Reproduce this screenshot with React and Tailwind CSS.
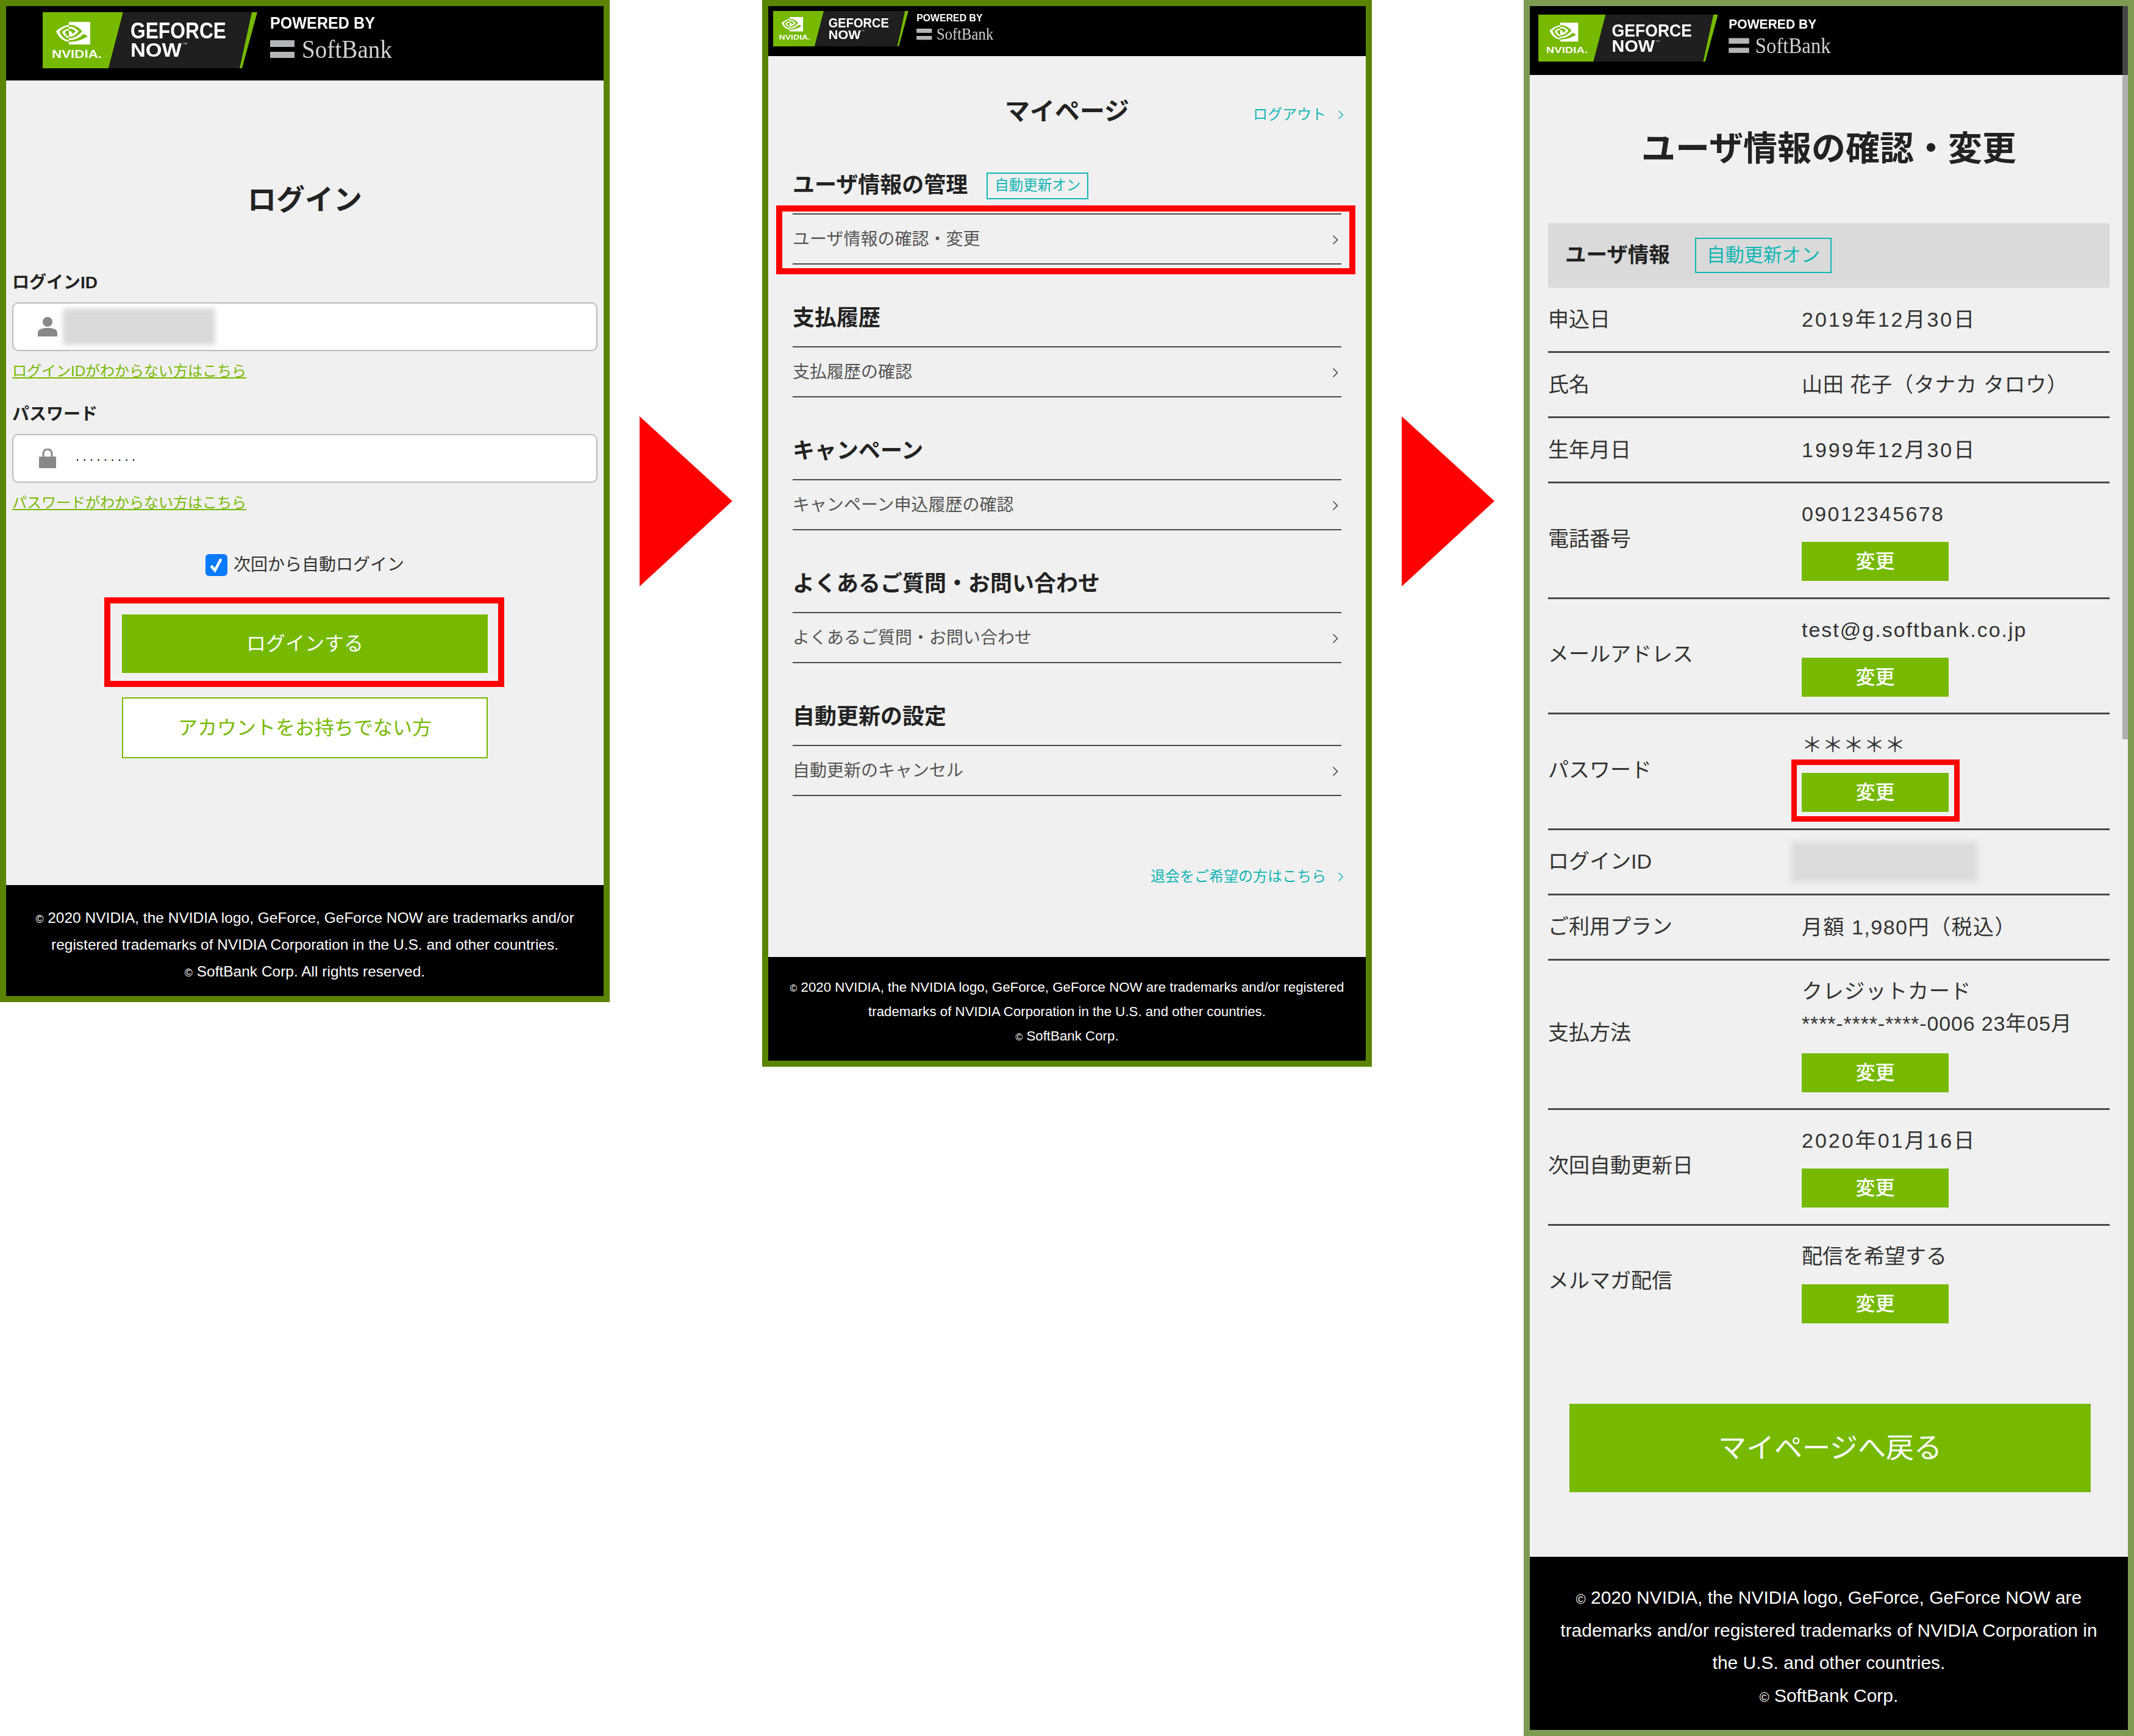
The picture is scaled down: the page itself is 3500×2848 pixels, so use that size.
import React from "react";

const sans = "font-['Liberation_Sans','Noto_Sans_CJK_JP',sans-serif]";

function Logo({ className }) {
  return (
    <svg viewBox="0 0 590 92" className={className}>
      <polygon points="0,0 132,0 108,92 0,92" fill="#76b900" />
      <polygon points="132,0 343,0 323,92 108,92" fill="#1f1f1f" />
      <polygon points="343,0 352,0 327,92 323,92" fill="#76b900" />
      <g transform="translate(22 6.5) scale(2.33)">
        <path
          fill="#fff"
          d="M8.948 8.798v-1.43a6.7 6.7 0 0 1 .424-.018c3.922-.124 6.493 3.374 6.493 3.374s-2.774 3.851-5.75 3.851c-.398 0-.787-.062-1.158-.185v-4.346c1.528.185 1.837.857 2.747 2.385l2.04-1.714s-1.492-1.952-4-1.952a6.016 6.016 0 0 0-.796.035m0-4.735v2.138l.424-.027c5.45-.185 9.01 4.47 9.01 4.47s-4.08 4.964-8.33 4.964c-.37 0-.733-.035-1.095-.097v1.325c.3.035.61.062.91.062 3.957 0 6.82-2.023 9.593-4.408.459.371 2.34 1.263 2.73 1.652-2.633 2.208-8.772 3.984-12.253 3.984-.335 0-.653-.018-.971-.053v1.864H24V4.063zm0 10.326v1.131c-3.657-.654-4.673-4.46-4.673-4.46s1.758-1.944 4.673-2.262v1.237H8.94c-1.528-.186-2.73 1.245-2.73 1.245s.68 2.412 2.739 3.11M2.456 10.9s2.164-3.197 6.5-3.533V6.201C4.153 6.59 0 10.653 0 10.653s2.35 6.802 8.948 7.42v-1.237c-4.84-.6-6.492-5.936-6.492-5.936z"
        />
      </g>
      <text x="15" y="75" fontFamily="Liberation Sans" fontWeight="700" fontSize="18" fill="#fff" textLength="82" lengthAdjust="spacingAndGlyphs">NVIDIA.</text>
      <text x="144" y="43" fontFamily="Liberation Sans" fontWeight="700" fontSize="36" fill="#fff" textLength="157" lengthAdjust="spacingAndGlyphs">GEFORCE</text>
      <text x="144" y="73" fontFamily="Liberation Sans" fontWeight="700" fontSize="32" fill="#fff" textLength="84" lengthAdjust="spacingAndGlyphs">NOW</text>
      <text x="229" y="56" fontFamily="Liberation Sans" fontSize="9" fill="#bbb">™</text>
      <text x="373" y="27" fontFamily="Liberation Sans" fontWeight="700" fontSize="27" fill="#fff" textLength="172" lengthAdjust="spacingAndGlyphs">POWERED BY</text>
      <rect x="373" y="46" width="40" height="11" fill="#b3b6b9" />
      <rect x="373" y="65" width="40" height="10" fill="#b3b6b9" />
      <text x="425" y="75" fontFamily="Liberation Serif" fontSize="42" fill="#d0d0d0" textLength="148" lengthAdjust="spacingAndGlyphs">SoftBank</text>
    </svg>
  );
}

function Chevron({ className }) {
  return (
    <svg viewBox="0 0 10 16" fill="none" className={className}>
      <polyline points="1.5,1 8.5,8 1.5,15" stroke="currentColor" strokeWidth="1.6" />
    </svg>
  );
}

function Arrow() {
  return (
    <svg viewBox="0 0 152 279" className="w-[152px] h-[279px] shrink-0 mt-[683px]">
      <polygon points="0,0 152,139 0,279" fill="#ff0000" />
    </svg>
  );
}

function PersonIcon() {
  return (
    <svg viewBox="0 0 32 32" className="w-[32px] h-[32px] shrink-0">
      <circle cx="16" cy="8" r="8" fill="#888" />
      <path d="M0 32v-6c0-6 7-8 16-8s16 2 16 8v6z" fill="#888" />
    </svg>
  );
}

function LockIcon() {
  return (
    <svg viewBox="0 0 28 32" className="w-[28px] h-[32px] shrink-0">
      <path d="M7 14V8a7 7 0 0 1 14 0v6" fill="none" stroke="#888" strokeWidth="3" />
      <rect x="0" y="13" width="28" height="19" fill="#888" />
    </svg>
  );
}

function Copy() {
  return <span className="text-[0.72em] leading-none">©</span>;
}

function LoginPanel() {
  return (
    <section className="w-[1000px] h-[1644px] shrink-0 border-[10px] border-[#5a8400] bg-[#f0f0f0] flex flex-col">
      <header className="h-[122px] shrink-0 bg-black pl-[60px] pt-[10px]">
        <Logo className="w-[590px] h-[92px] blur-[0.5px]" />
      </header>
      <div className="flex-1 px-[10px] text-[#222]">
        <h1 className="mt-[166px] text-center text-[47px] leading-[60px] font-bold">ログイン</h1>
        <div className="mt-[86px] text-[28px] leading-[40px] font-bold">ログインID</div>
        <div className="mt-[12px] h-[80px] bg-white border-2 border-[#bbbbbb] rounded-[10px] flex items-center pl-[40px]">
          <PersonIcon />
          <div className="ml-[9px] w-[250px] h-[60px] bg-[#dbdad9] blur-[4px]" />
        </div>
        <a className="block mt-[18px] text-[24px] leading-[30px] text-[#76b900] underline">ログインIDがわからない方はこちら</a>
        <div className="mt-[36px] text-[28px] leading-[40px] font-bold">パスワード</div>
        <div className="mt-[12px] h-[80px] bg-white border-2 border-[#bbbbbb] rounded-[10px] flex items-center pl-[42px]">
          <LockIcon />
          <span className="ml-[32px] mb-[6px] text-[22px] leading-none tracking-[5.4px] text-black">.........</span>
        </div>
        <a className="block mt-[18px] text-[24px] leading-[30px] text-[#76b900] underline">パスワードがわからない方はこちら</a>
        <div className="mt-[69px] h-[36px] flex items-center justify-center gap-[10px] text-[28px] text-[#333]">
          <span className="w-[36px] h-[36px] rounded-[6px] bg-[#0a7aff] flex items-center justify-center">
            <svg viewBox="0 0 24 24" fill="none" className="w-[30px] h-[30px]">
              <polyline points="5,13 10,19 18,4" stroke="#fff" strokeWidth="3.6" />
            </svg>
          </span>
          <span>次回から自動ログイン</span>
        </div>
        <div className="relative mx-auto mt-[63px] w-[600px] h-[96px] bg-[#76b900] text-white text-[32px] flex items-center justify-center">
          ログインする
          <span className="absolute -left-[29px] -right-[27px] -top-[28px] -bottom-[23px] border-[10px] border-[#ff0000]" />
        </div>
        <div className="mx-auto mt-[40px] w-[600px] h-[100px] bg-white border-2 border-[#76b900] text-[#76b900] text-[32px] flex items-center justify-center">
          アカウントをお持ちでない方
        </div>
      </div>
      <footer className="h-[182px] shrink-0 bg-black text-white text-center text-[24.5px] leading-[44px] pt-[32px] whitespace-nowrap">
        <Copy /> 2020 NVIDIA, the NVIDIA logo, GeForce, GeForce NOW are trademarks and/or
        <br />
        registered trademarks of NVIDIA Corporation in the U.S. and other countries.
        <br />
        <Copy /> SoftBank Corp. All rights reserved.
      </footer>
    </section>
  );
}

function MenuSection({ title, item, tag, highlight, first }) {
  return (
    <div className={first ? "mt-[74px]" : "mt-[66px]"}>
      <div className="h-[44px] flex items-center gap-[31px]">
        <h2 className="text-[36px] leading-[44px] font-bold text-[#222]">{title}</h2>
        {tag && (
          <span className="w-[167px] h-[44px] mt-[2px] border-2 border-[#12b5b5] text-[#12b5b5] text-[23.5px] flex items-center justify-center">
            自動更新オン
          </span>
        )}
      </div>
      <div className="relative mt-[24px] h-[84px] border-y-2 border-[#4a4a4a] flex items-center justify-between text-[28px] text-[#555]">
        <span className="mt-[2px]">{item}</span>
        <Chevron className="w-[10px] h-[17px] mr-[5px] mt-[3px] text-[#444]" />
        {highlight && (
          <span className="absolute -left-[27px] -right-[23px] -top-[15px] -bottom-[18px] border-[10px] border-[#ff0000]" />
        )}
      </div>
    </div>
  );
}

function MyPagePanel() {
  return (
    <section className="w-[1000px] h-[1750px] shrink-0 border-[10px] border-[#5a8400] bg-[#f0f0f0] flex flex-col">
      <header className="h-[82px] shrink-0 bg-black pl-[8px] pt-[8px]">
        <Logo className="w-[372px] h-[58px] blur-[0.5px]" />
      </header>
      <div className="flex-1 px-[40px]">
        <div className="mt-[66px] grid grid-cols-[1fr_auto_1fr] items-center">
          <span />
          <h1 className="text-[41px] leading-[50px] font-bold text-[#222]">マイページ</h1>
          <a className="justify-self-end -mr-[4px] mt-[10px] flex items-center gap-[19px] text-[24px] text-[#12b5b5]">
            ログアウト
            <Chevron className="w-[10px] h-[15px]" />
          </a>
        </div>
        <MenuSection first title="ユーザ情報の管理" item="ユーザ情報の確認・変更" tag highlight />
        <MenuSection title="支払履歴" item="支払履歴の確認" />
        <MenuSection title="キャンペーン" item="キャンペーン申込履歴の確認" />
        <MenuSection title="よくあるご質問・お問い合わせ" item="よくあるご質問・お問い合わせ" />
        <MenuSection title="自動更新の設定" item="自動更新のキャンセル" />
        <a className="mt-[112px] -mr-[4px] h-[40px] flex items-center justify-end gap-[19px] text-[24px] text-[#12b5b5]">
          退会をご希望の方はこちら
          <Chevron className="w-[10px] h-[15px]" />
        </a>
      </div>
      <footer className="h-[170px] shrink-0 bg-black text-white text-center text-[22.3px] leading-[40px] pt-[30px] whitespace-nowrap">
        <Copy /> 2020 NVIDIA, the NVIDIA logo, GeForce, GeForce NOW are trademarks and/or registered
        <br />
        trademarks of NVIDIA Corporation in the U.S. and other countries.
        <br />
        <Copy /> SoftBank Corp.
      </footer>
    </section>
  );
}

function ChangeButton({ highlight }) {
  return (
    <div className="relative mt-[18px] w-[241px] h-[64px] bg-[#76b900] text-white text-[32px] font-medium flex items-center justify-center">
      変更
      {highlight && (
        <span className="absolute -left-[17px] -right-[18px] -top-[22px] -bottom-[16px] border-[9px] border-[#ff0000]" />
      )}
    </div>
  );
}

function InfoRow({ label, children }) {
  return (
    <div className="grid grid-cols-[416px_1fr] items-center pt-[24px] pb-[24px] border-b-[3px] border-[#4a4a4a]">
      <div className="text-[34px] text-[#333]">{label}</div>
      <div className="text-[34px] leading-[56px] text-[#333] whitespace-nowrap">{children}</div>
    </div>
  );
}

function ButtonRow({ label, children, highlight, last }) {
  return (
    <div className={last ? "grid grid-cols-[416px_1fr] items-center pt-[22px] pb-[26.5px]" : "grid grid-cols-[416px_1fr] items-center pt-[22px] pb-[26.5px] border-b-[3px] border-[#4a4a4a]"}>
      <div className="text-[34px] text-[#333]">{label}</div>
      <div className="text-[34px] leading-[56px] text-[#333] whitespace-nowrap">
        {children}
        <ChangeButton highlight={highlight} />
      </div>
    </div>
  );
}

function ProfilePanel() {
  return (
    <section className="relative w-[1001px] h-[2848px] shrink-0 border-[10px] border-[#7d9c52] bg-[#f0f0f0] flex flex-col">
      <header className="h-[113px] shrink-0 bg-black pl-[14px] pt-[14px]">
        <Logo className="w-[494px] h-[77px] blur-[0.7px]" />
      </header>
      <div className="flex-1 px-[30px]">
        <h1 className="mt-[86px] text-center text-[56px] leading-[70px] font-bold text-[#222]">ユーザ情報の確認・変更</h1>
        <div className="mt-[87px] h-[106px] bg-[#dadada] flex items-center pl-[28px] gap-[41px]">
          <h2 className="text-[34.5px] font-bold text-[#222]">ユーザ情報</h2>
          <span className="w-[224px] h-[58px] border-2 border-[#12b5b5] text-[#12b5b5] text-[31px] flex items-center justify-center">
            自動更新オン
          </span>
        </div>
        <InfoRow label="申込日"><span className="tracking-[3px]">2019年12月30日</span></InfoRow>
        <InfoRow label="氏名"><span className="tracking-[0.7px]">山田 花子（タナカ タロウ）</span></InfoRow>
        <InfoRow label="生年月日"><span className="tracking-[3px]">1999年12月30日</span></InfoRow>
        <ButtonRow label="電話番号"><span className="tracking-[2.4px]">09012345678</span></ButtonRow>
        <ButtonRow label="メールアドレス"><span className="tracking-[2px]">test@g.softbank.co.jp</span></ButtonRow>
        <ButtonRow label="パスワード" highlight>＊＊＊＊＊</ButtonRow>
        <InfoRow label="ログインID">
          <div className="-ml-[17px] -my-[5px] w-[305px] h-[66px] bg-[#dcdbda] blur-[5px]" />
        </InfoRow>
        <InfoRow label="ご利用プラン"><span className="tracking-[1.5px]">月額 1,980円（税込）</span></InfoRow>
        <ButtonRow label="支払方法">
          <div className="tracking-[0.8px]">クレジットカード</div>
          <div className="tracking-[0.85px] -mt-[3px] pb-[3px]">****-****-****-0006 23年05月</div>
        </ButtonRow>
        <ButtonRow label="次回自動更新日"><span className="tracking-[3px]">2020年01月16日</span></ButtonRow>
        <ButtonRow label="メルマガ配信" last>配信を希望する</ButtonRow>
        <div className="mt-[106px] ml-[35px] mr-[31px] h-[145px] bg-[#76b900] text-white text-[46px] flex items-center justify-center">
          マイページへ戻る
        </div>
      </div>
      <footer className="h-[284px] shrink-0 bg-black text-white text-center text-[30px] leading-[53.5px] pt-[40px] whitespace-nowrap">
        <Copy /> 2020 NVIDIA, the NVIDIA logo, GeForce, GeForce NOW are
        <br />
        trademarks and/or registered trademarks of NVIDIA Corporation in
        <br />
        the U.S. and other countries.
        <br />
        <Copy /> SoftBank Corp.
      </footer>
      <div className="absolute top-0 right-0 w-[9px] h-[1203px] bg-[rgba(124,124,124,0.55)]" />
    </section>
  );
}

export default function App() {
  return (
    <div className={`${sans} w-[3500px] h-[2848px] bg-white flex items-start overflow-hidden`}>
      <LoginPanel />
      <div className="w-[250px] shrink-0 flex justify-center"><Arrow /></div>
      <MyPagePanel />
      <div className="w-[249px] shrink-0 flex justify-center"><Arrow /></div>
      <ProfilePanel />
    </div>
  );
}
